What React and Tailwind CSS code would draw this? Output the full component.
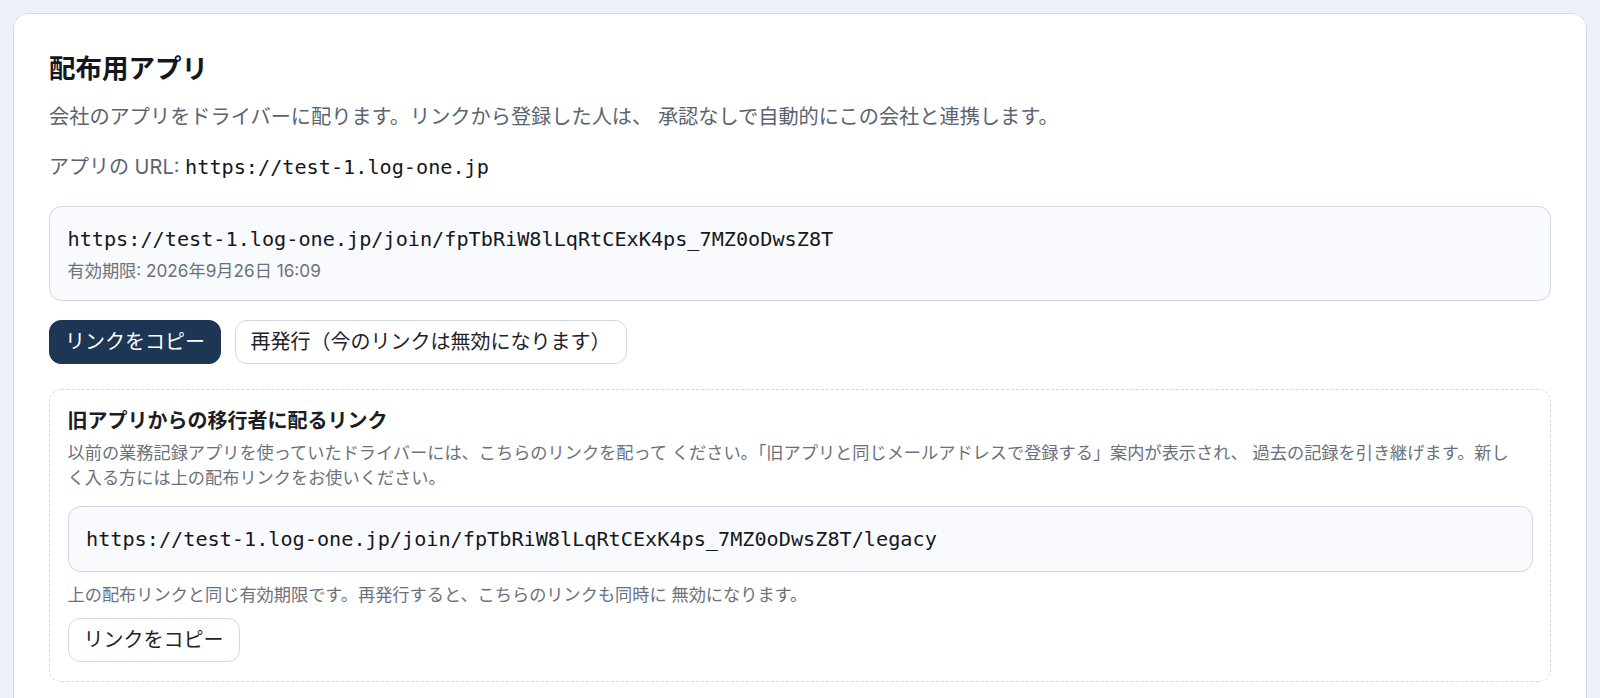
// ── App distribution settings card ──
const monoText = "font-['DejaVu_Sans_Mono',monospace] text-[#15181d]";

function Button({ primary, children }) {
  return (
    <button
      type="button"
      className={
        primary
          ? 'h-[44px] rounded-[12px] border border-[#1c3654] bg-[#1c3654] px-[15px] text-[20px] leading-[30px] text-white'
          : 'h-[44px] rounded-[12px] border border-[#d3d8e0] bg-white px-[15px] text-[20px] leading-[30px] text-[#1f2329]'
      }
    >
      {children}
    </button>
  );
}

export default function App() {
  const joinUrl = 'https://test-1.log-one.jp/join/fpTbRiW8lLqRtCExK4ps_7MZ0oDwsZ8T';

  return (
    <div className="min-h-screen bg-[#ecf1f9] p-[13px] font-[family-name:Inter,'Noto_Sans_CJK_JP',sans-serif]">
      <section className="rounded-[15px] border border-[#d5dae2] bg-white px-[35px] pt-[36px] pb-[35px]">
        <h2 className="text-[26.5px] leading-[37px] font-bold text-[#14171c]">配布用アプリ</h2>
        <p className="mt-[15px] text-[20.2px] leading-[30px] text-[#5c6370]">
          会社のアプリをドライバーに配ります。リンクから登録した人は、 承認なしで自動的にこの会社と連携します。
        </p>
        <p className="mt-[19.5px] text-[20px] leading-[30px] text-[#5c6370]">
          アプリの URL: <span className={`${monoText} text-[20.2px]`}>https://test-1.log-one.jp</span>
        </p>

        {/* ── Current join link ── */}
        <div className="mt-[24px] rounded-[12.5px] border border-[#d0d6df] bg-[#f8fafd] px-[17.5px] py-[17px]">
          <div className={`${monoText} text-[20.2px] leading-[30px]`}>{joinUrl}</div>
          <div className="mt-[4px] text-[17.2px] leading-[25px] text-[#6b717c]">有効期限: 2026年9月26日 16:09</div>
        </div>

        <div className="mt-[19px] flex gap-[13.5px]">
          <Button primary>リンクをコピー</Button>
          <Button>再発行（今のリンクは無効になります）</Button>
        </div>

        {/* ── Legacy migration link ── */}
        <div className="mt-[25px] rounded-[12.5px] border border-dashed border-[#d3d7de] px-[17.5px] pt-[19px] pb-[19px]">
          <h3 className="text-[20px] leading-[25px] font-bold text-[#1a1d23]">旧アプリからの移行者に配るリンク</h3>
          <p className="mt-[6px] pr-[16px] text-[17.2px] leading-[25.5px] text-[#6b717c]">
            以前の業務記録アプリを使っていたドライバーには、こちらのリンクを配って ください。「旧アプリと同じメールアドレスで登録する」案内が表示され、 過去の記録を引き継げます。新しく入る方には上の配布リンクをお使いください。
          </p>
          <div className="mt-[15px] rounded-[12.5px] border border-[#d0d6df] bg-[#f8fafd] px-[17.5px] py-[17px]">
            <div className={`${monoText} text-[20.2px] leading-[30px]`}>{joinUrl}/legacy</div>
          </div>
          <p className="mt-[10px] text-[17.2px] leading-[25.5px] text-[#6b717c]">
            上の配布リンクと同じ有効期限です。再発行すると、こちらのリンクも同時に 無効になります。
          </p>
          <div className="mt-[11px]">
            <Button>リンクをコピー</Button>
          </div>
        </div>
      </section>
    </div>
  );
}
